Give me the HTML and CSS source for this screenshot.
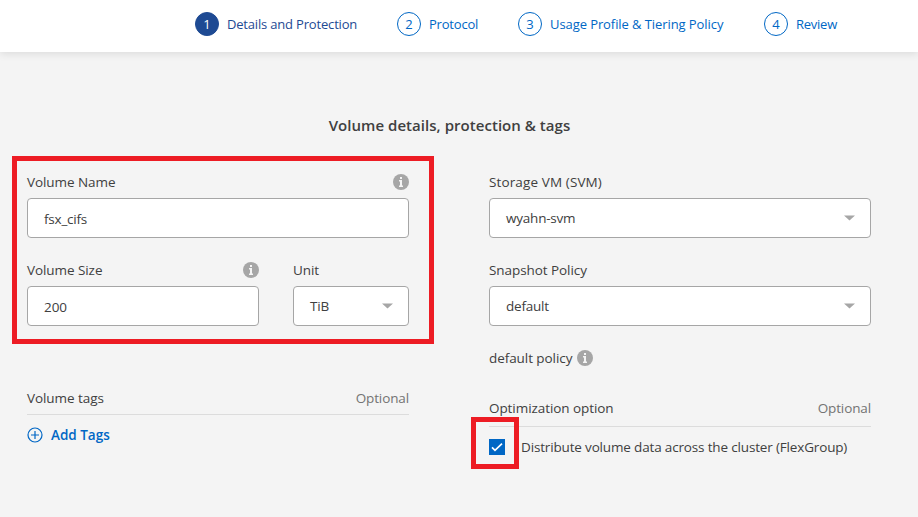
FILE: index.html
```html
<!DOCTYPE html>
<html lang="en">
<head>
<meta charset="utf-8">
<title>Volume details</title>
<link rel="stylesheet" href="styles.css">
</head>
<body>
<svg class="defs" width="0" height="0" aria-hidden="true">
  <symbol id="info" viewBox="0 0 16 16"><circle cx="8" cy="8" r="8" fill="#a6a6a6"/><path d="M7 3h2v2H7zM6 6h3v5.5h1V13H6v-1.5h1v-4H6z" fill="#f4f4f4"/></symbol>
  <symbol id="caret" viewBox="0 0 11 6"><path d="M0 .5h11L5.5 5.5z" fill="#a6a6a6"/></symbol>
</svg>
<header class="steps">
  <div class="step active"><span class="num">1</span><span class="step-name s1">Details and Protection</span></div>
  <div class="step"><span class="num">2</span><span class="step-name s2">Protocol</span></div>
  <div class="step"><span class="num">3</span><span class="step-name s3">Usage Profile &amp; Tiering Policy</span></div>
  <div class="step"><span class="num">4</span><span class="step-name s4">Review</span></div>
</header>
<main>
  <h1><span>Volume details, protection &amp; tags</span></h1>
  <div class="columns">
    <section class="column">
      <div class="field">
        <div class="label"><span>Volume Name</span><svg class="info"><use href="#info"/></svg></div>
        <div class="control input"><span class="snug">fsx_cifs</span></div>
      </div>
      <div class="field-row">
        <div class="field size">
          <div class="label"><span>Volume Size</span><svg class="info"><use href="#info"/></svg></div>
          <div class="control input"><span>200</span></div>
        </div>
        <div class="field unit">
          <div class="label"><span>Unit</span></div>
          <div class="control"><span class="snug">TiB</span><svg class="caret"><use href="#caret"/></svg></div>
        </div>
      </div>
      <div class="section-head tags"><span>Volume tags</span><span class="optional">Optional</span></div>
      <div class="add"><svg class="plus" viewBox="0 0 16 16"><circle cx="8" cy="8" r="7" /><path d="M8 4v8M4 8h8"/></svg><span>Add Tags</span></div>
      <div class="highlight details-mark"></div>
    </section>
    <section class="column">
      <div class="field">
        <div class="label"><span class="svm">Storage VM (SVM)</span></div>
        <div class="control"><span class="snug">wyahn-svm</span><svg class="caret"><use href="#caret"/></svg></div>
      </div>
      <div class="field">
        <div class="label"><span>Snapshot Policy</span></div>
        <div class="control"><span class="snug">default</span><svg class="caret"><use href="#caret"/></svg></div>
      </div>
      <div class="policy"><span>default policy</span><svg class="info"><use href="#info"/></svg></div>
      <div class="section-head"><span>Optimization option</span><span class="optional">Optional</span></div>
      <div class="check"><svg class="box" viewBox="0 0 16 16"><path d="M0 0h16v16H0z" fill="#0067c5"/><path d="M3 8.4l3 3L13 4.6" fill="none" stroke="#fff" stroke-width="1.7"/></svg><span>Distribute volume data across the cluster (FlexGroup)</span></div>
      <div class="highlight check-mark"></div>
    </section>
  </div>
</main>
</body>
</html>
```
FILE: styles.css
```css
* { box-sizing: border-box; }
body {
  margin: 0;
  height: 517px;
  overflow: hidden;
  background: #f4f4f4;
  color: #404040;
  font: 13.5px/20px "Open Sans", "Noto Sans", sans-serif;
  letter-spacing: -.07px;
}
.defs { position: absolute; }
svg { display: block; flex: none; }
.steps {
  display: flex;
  gap: 40px;
  height: 52px;
  padding: 12px 0 0 195px;
  background: #fff;
  box-shadow: 0 2px 8px rgba(0, 0, 0, .1);
  color: #0067c5;
  font-size: 13px;
  letter-spacing: -.16px;
}
.step { display: flex; height: 24px; gap: 8px; align-items: center; white-space: nowrap; }
.num {
  width: 24px;
  height: 24px;
  border: 1px solid #0067c5;
  border-radius: 50%;
  line-height: 22px;
  text-align: center;
}
.s1 { width: 130px; letter-spacing: -.18px; }
.s2 { width: 49px; letter-spacing: -.2px; }
.s3 { width: 174px; letter-spacing: -.08px; }
.s4 { letter-spacing: -.25px; }
.active { color: #1e4a93; }
.active .num { background: #1e4a93; border-color: #1e4a93; color: #fff; }
h1 { margin: 63px 0 0; padding-right: 19px; font-size: 15px; line-height: 20px; font-weight: 600; letter-spacing: .04px; text-align: center; }
.columns { display: grid; grid-template-columns: 382px 382px; gap: 80px; padding: 37px 0 0 27px; }
.label { display: flex; justify-content: space-between; align-items: center; height: 20px; margin-bottom: 6px; }
.svm { letter-spacing: .12px; }
.info { width: 16px; height: 16px; }
.field { margin-bottom: 22px; }
.control {
  display: flex;
  align-items: center;
  justify-content: space-between;
  height: 40px;
  padding: 0 15px 0 16px;
  background: #fff;
  border: 1px solid #a6a6a6;
  border-radius: 4px;
}
.input { padding-top: 2px; }
.snug { letter-spacing: -.22px; }
.caret { width: 11px; height: 6px; }
.field-row { display: flex; gap: 34px; }
.size { width: 232px; }
.unit { width: 116px; }
.section-head { display: flex; justify-content: space-between; height: 29px; border-bottom: 1px solid #dcdcdc; }
.tags { margin-top: 40px; height: 27px; }
.optional { color: #737373; letter-spacing: -.12px; }
.add { display: flex; align-items: center; gap: 8px; margin-top: 10px; color: #0067c5; font-weight: 600; letter-spacing: 0; }
.plus { width: 16px; height: 16px; fill: none; stroke: #0067c5; stroke-width: 1.2; }
.policy { display: flex; align-items: center; gap: 5px; height: 20px; margin-bottom: 30px; }
.check { display: flex; align-items: center; gap: 16px; margin-top: 10px; white-space: nowrap; letter-spacing: -.16px; }
.box { width: 16px; height: 16px; }
.highlight { position: absolute; border: 5px solid #ed1c24; }
.details-mark { left: 12px; top: 156px; width: 422px; height: 188px; }
.check-mark { left: 471px; top: 417px; width: 48px; height: 52px; }
```
